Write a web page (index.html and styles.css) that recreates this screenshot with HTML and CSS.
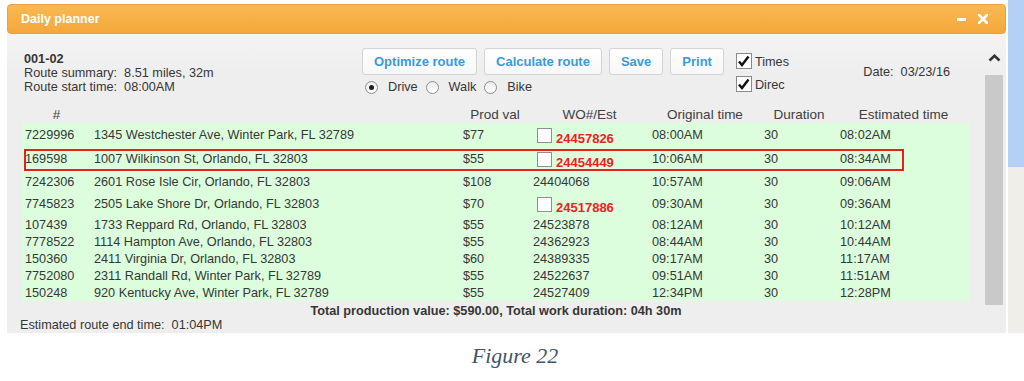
FILE: index.html
```html
<!DOCTYPE html>
<html>
<head>
    <title>Daily planner</title>
    <link rel="stylesheet" href="styles.css">
</head>
<body>
    <div class="page">
        <div class="window">
            <div class="titlebar">
                <span class="title">Daily planner</span>
                <span class="controls">
                    <span class="minimize"></span>
                    <svg class="close" width="10" height="10" viewBox="0 0 10 10"><path d="M1 1 L9 9 M9 1 L1 9" stroke="#fff" stroke-width="2.6" stroke-linecap="square"/></svg>
                </span>
            </div>
            <div class="body">
                <div class="main">
                    <div class="top">
                        <div class="summary">
                            <div class="route-id">001-02</div>
                            <div>Route summary:&nbsp; 8.51 miles, 32m</div>
                            <div>Route start time:&nbsp; 08:00AM</div>
                        </div>
                        <div class="actions">
                            <div class="buttons">
                                <button type="button">Optimize route</button>
                                <button type="button">Calculate route</button>
                                <button type="button">Save</button>
                                <button type="button">Print</button>
                            </div>
                            <div class="modes">
                                <label class="mode"><span class="radio checked"></span>Drive</label>
                                <label class="mode"><span class="radio"></span>Walk</label>
                                <label class="mode"><span class="radio"></span>Bike</label>
                            </div>
                        </div>
                        <div class="toggles">
                            <label class="toggle"><span class="box"><svg width="13" height="13" viewBox="0 0 13 13"><path d="M2 6.5 L5 10 L11.5 1.5" fill="none" stroke="#111" stroke-width="2.4"/></svg></span>Times</label>
                            <label class="toggle"><span class="box"><svg width="13" height="13" viewBox="0 0 13 13"><path d="M2 6.5 L5 10 L11.5 1.5" fill="none" stroke="#111" stroke-width="2.4"/></svg></span>Direc</label>
                        </div>
                        <div class="date">Date:&nbsp; 03/23/16</div>
                    </div>

                    <div class="grid">
                        <table>
                            <colgroup>
                                <col class="c-id"><col class="c-addr"><col class="c-prod"><col class="c-wo"><col class="c-orig"><col class="c-dur"><col class="c-est">
                            </colgroup>
                            <thead>
                                <tr><th>#</th><th></th><th>Prod val</th><th>WO#/Est</th><th>Original time</th><th>Duration</th><th>Estimated time</th></tr>
                            </thead>
                            <tbody>
                                <tr class="chk"><td>7229996</td><td>1345 Westchester Ave, Winter Park, FL 32789</td><td>$77</td><td><span class="wo"><span class="cb"></span><span class="est">24457826</span></span></td><td>08:00AM</td><td>30</td><td>08:02AM</td></tr>
                                <tr class="chk"><td>169598</td><td>1007 Wilkinson St, Orlando, FL 32803</td><td>$55</td><td><span class="wo"><span class="cb"></span><span class="est">24454449</span></span></td><td>10:06AM</td><td>30</td><td>08:34AM</td></tr>
                                <tr class="mid"><td>7242306</td><td>2601 Rose Isle Cir, Orlando, FL 32803</td><td>$108</td><td>24404068</td><td>10:57AM</td><td>30</td><td>09:06AM</td></tr>
                                <tr class="chk"><td>7745823</td><td>2505 Lake Shore Dr, Orlando, FL 32803</td><td>$70</td><td><span class="wo"><span class="cb"></span><span class="est">24517886</span></span></td><td>09:30AM</td><td>30</td><td>09:36AM</td></tr>
                                <tr><td>107439</td><td>1733 Reppard Rd, Orlando, FL 32803</td><td>$55</td><td>24523878</td><td>08:12AM</td><td>30</td><td>10:12AM</td></tr>
                                <tr><td>7778522</td><td>1114 Hampton Ave, Orlando, FL 32803</td><td>$55</td><td>24362923</td><td>08:44AM</td><td>30</td><td>10:44AM</td></tr>
                                <tr><td>150360</td><td>2411 Virginia Dr, Orlando, FL 32803</td><td>$60</td><td>24389335</td><td>09:17AM</td><td>30</td><td>11:17AM</td></tr>
                                <tr><td>7752080</td><td>2311 Randall Rd, Winter Park, FL 32789</td><td>$55</td><td>24522637</td><td>09:51AM</td><td>30</td><td>11:51AM</td></tr>
                                <tr><td>150248</td><td>920 Kentucky Ave, Winter Park, FL 32789</td><td>$55</td><td>24527409</td><td>12:34PM</td><td>30</td><td>12:28PM</td></tr>
                            </tbody>
                        </table>
                        <div class="highlight"></div>
                    </div>

                    <div class="total">Total production value: $590.00, Total work duration: 04h 30m</div>
                    <div class="end-time">Estimated route end time:&nbsp; 01:04PM</div>
                </div>
                <div class="scrollbar">
                    <div class="arrow"><svg width="13" height="8" viewBox="0 0 13 8"><path d="M1.5 6.5 L6.5 1.8 L11.5 6.5" fill="none" stroke="#333" stroke-width="2.6"/></svg></div>
                    <div class="track"></div>
                </div>
            </div>
        </div>
        <div class="map">
            <div class="water"></div>
            <div class="land"></div>
        </div>
    </div>
    <p class="caption">Figure 22</p>
</body>
</html>
```

FILE: styles.css
```css
body {
    margin: 0;
    background-color: #fff;
    font-family: "Liberation Sans", Arial, sans-serif;
    font-size: 12.7px;
    color: #363636;
}
.page {
    display: flex;
    gap: 2px;
    height: 333px;
}
.window {
    width: 999px;
    margin-top: 4px;
    margin-left: 7px;
    display: flex;
    flex-direction: column;
    background: linear-gradient(#f8f8f8, #eeeeee 70px);
}
.titlebar {
    height: 30px;
    box-sizing: border-box;
    display: flex;
    align-items: center;
    padding: 0 17px 0 13px;
    background: linear-gradient(#f9b954, #f4a73a);
    border: 1px solid #eaa040;
    border-radius: 4px;
}
.title {
    color: #fff;
    font-weight: bold;
    font-size: 12.5px;
}
.controls {
    margin-left: auto;
    display: flex;
    align-items: center;
    gap: 12px;
}
.minimize {
    width: 9px;
    height: 3px;
    background-color: #fff;
}
.body {
    flex: 1;
    display: flex;
}
.main {
    flex: 1;
    padding-left: 13px;
}
.top {
    display: flex;
    padding-top: 14px;
    height: 47px;
}
.summary {
    flex: none;
    width: 338px;
    margin-left: 4px;
    margin-top: 4px;
    line-height: 14px;
}
.route-id {
    font-weight: bold;
}
.buttons {
    display: flex;
    gap: 7px;
}
.buttons button {
    height: 27px;
    padding: 0 11px;
    font-family: inherit;
    font-size: 13px;
    font-weight: bold;
    color: #3b9ad8;
    background: linear-gradient(#ffffff, #f7f7f7);
    border: 1px solid #d3d3d3;
    border-radius: 3px;
}
.modes {
    display: flex;
    align-items: center;
    gap: 8px;
    margin-top: 4px;
    padding-left: 3px;
    height: 16px;
}
.mode {
    display: flex;
    align-items: center;
    gap: 10px;
}
.radio {
    width: 11px;
    height: 11px;
    border: 1px solid #8d8d8d;
    border-radius: 50%;
    background: linear-gradient(#ececec, #ffffff);
    display: flex;
    align-items: center;
    justify-content: center;
}
.radio.checked::after {
    content: "";
    width: 5px;
    height: 5px;
    border-radius: 50%;
    background-color: #1e1e1e;
}
.toggles {
    margin-left: 12px;
    margin-top: 5px;
    display: flex;
    flex-direction: column;
    gap: 7px;
}
.toggle {
    display: flex;
    align-items: flex-end;
    gap: 3px;
    line-height: 14px;
}
.box {
    width: 14px;
    height: 14px;
    border: 1px solid #8a8a8a;
    background-color: #fff;
    display: flex;
    align-items: center;
    justify-content: center;
}
.date {
    margin-left: auto;
    margin-right: 35px;
    margin-top: 17px;
    line-height: 14px;
}
.grid {
    position: relative;
    width: 948px;
    margin-left: 2px;
    margin-top: 10px;
}
table {
    width: 948px;
    table-layout: fixed;
    border-collapse: collapse;
}
.c-id { width: 69px; }
.c-addr { width: 369px; }
.c-prod { width: 70px; }
.c-wo { width: 119px; }
.c-orig { width: 112px; }
.c-dur { width: 76px; }
.c-est { width: 133px; }
th {
    height: 18px;
    padding: 0;
    font-weight: normal;
    font-size: 13.5px;
    color: #404040;
    text-align: center;
}
tbody {
    background-color: #dcfedc;
}
td {
    height: 17px;
    padding: 0 3px;
    white-space: nowrap;
    line-height: 14px;
}
tr.chk td {
    height: 24px;
}
tr.mid td {
    height: 21px;
}
.wo {
    display: inline-flex;
    align-items: center;
}
.cb {
    width: 13px;
    height: 13px;
    margin: 0 4px 0 4px;
    border: 1px solid #8f8f8f;
    background-color: #fff;
}
.est {
    margin-top: 8px;
    color: #f21d1d;
    font-weight: bold;
    font-size: 13px;
}
.highlight {
    position: absolute;
    top: 44px;
    left: 2px;
    width: 880px;
    height: 22px;
    box-sizing: border-box;
    border: 2px solid #e8201c;
}
.total {
    width: 948px;
    margin-left: 2px;
    margin-top: 3px;
    text-align: center;
    font-weight: bold;
    line-height: 14px;
}
.end-time {
    line-height: 14px;
}
.scrollbar {
    width: 18px;
    margin-right: 3px;
    display: flex;
    flex-direction: column;
}
.arrow {
    height: 41px;
    display: flex;
    align-items: center;
    justify-content: center;
    padding-top: 6px;
    box-sizing: border-box;
}
.track {
    height: 230px;
    background-color: #c9c9c9;
}
.map {
    flex: 1;
    display: flex;
    flex-direction: column;
}
.water {
    height: 167px;
    background-color: #b5d0f5;
}
.land {
    flex: 1;
    background-color: #f0eee9;
}
.caption {
    margin: 11px 0 0;
    padding-left: 6px;
    text-align: center;
    font-family: "Liberation Serif", "Times New Roman", serif;
    font-style: italic;
    font-size: 22px;
    line-height: 24px;
    color: #44546a;
}
```
